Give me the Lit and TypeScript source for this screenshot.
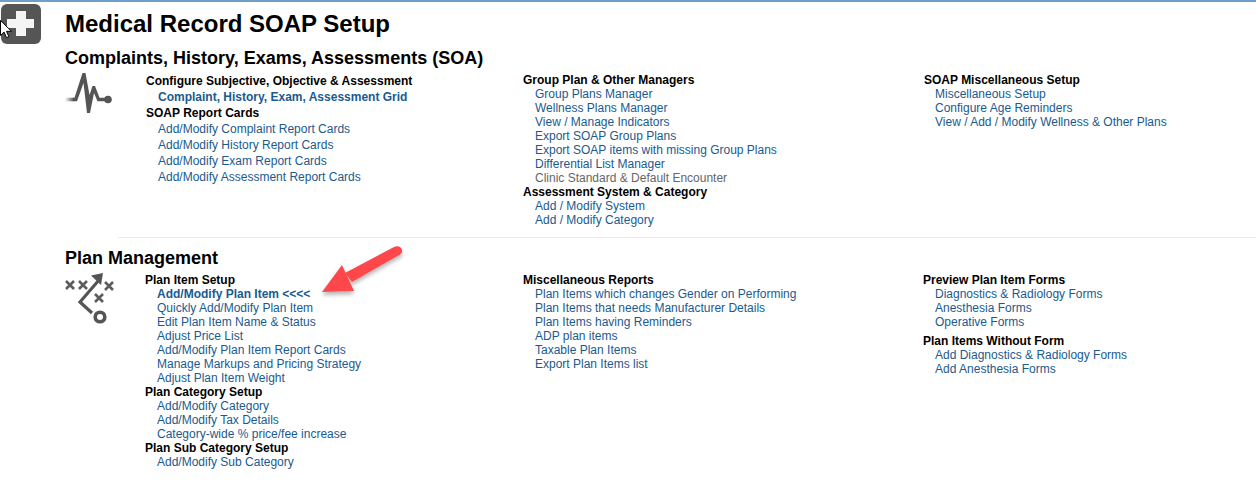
import { LitElement, css, html } from 'lit'
import { customElement } from 'lit/decorators.js'

type Row = { text: string; kind?: 'head' | 'head gap' | 'strong' | 'muted' }

const soaColumns: Row[][] = [
  [
    { text: 'Configure Subjective, Objective & Assessment', kind: 'head' },
    { text: 'Complaint, History, Exam, Assessment Grid', kind: 'strong' },
    { text: 'SOAP Report Cards', kind: 'head' },
    { text: 'Add/Modify Complaint Report Cards' },
    { text: 'Add/Modify History Report Cards' },
    { text: 'Add/Modify Exam Report Cards' },
    { text: 'Add/Modify Assessment Report Cards' },
  ],
  [
    { text: 'Group Plan & Other Managers', kind: 'head' },
    { text: 'Group Plans Manager' },
    { text: 'Wellness Plans Manager' },
    { text: 'View / Manage Indicators' },
    { text: 'Export SOAP Group Plans' },
    { text: 'Export SOAP items with missing Group Plans' },
    { text: 'Differential List Manager' },
    { text: 'Clinic Standard & Default Encounter', kind: 'muted' },
    { text: 'Assessment System & Category', kind: 'head' },
    { text: 'Add / Modify System' },
    { text: 'Add / Modify Category' },
  ],
  [
    { text: 'SOAP Miscellaneous Setup', kind: 'head' },
    { text: 'Miscellaneous Setup' },
    { text: 'Configure Age Reminders' },
    { text: 'View / Add / Modify Wellness & Other Plans' },
  ],
]

const planColumns: Row[][] = [
  [
    { text: 'Plan Item Setup', kind: 'head' },
    { text: 'Add/Modify Plan Item <<<<', kind: 'strong' },
    { text: 'Quickly Add/Modify Plan Item' },
    { text: 'Edit Plan Item Name & Status' },
    { text: 'Adjust Price List' },
    { text: 'Add/Modify Plan Item Report Cards' },
    { text: 'Manage Markups and Pricing Strategy' },
    { text: 'Adjust Plan Item Weight' },
    { text: 'Plan Category Setup', kind: 'head' },
    { text: 'Add/Modify Category' },
    { text: 'Add/Modify Tax Details' },
    { text: 'Category-wide % price/fee increase' },
    { text: 'Plan Sub Category Setup', kind: 'head' },
    { text: 'Add/Modify Sub Category' },
  ],
  [
    { text: 'Miscellaneous Reports', kind: 'head' },
    { text: 'Plan Items which changes Gender on Performing' },
    { text: 'Plan Items that needs Manufacturer Details' },
    { text: 'Plan Items having Reminders' },
    { text: 'ADP plan items' },
    { text: 'Taxable Plan Items' },
    { text: 'Export Plan Items list' },
  ],
  [
    { text: 'Preview Plan Item Forms', kind: 'head' },
    { text: 'Diagnostics & Radiology Forms' },
    { text: 'Anesthesia Forms' },
    { text: 'Operative Forms' },
    { text: 'Plan Items Without Form', kind: 'head gap' },
    { text: 'Add Diagnostics & Radiology Forms' },
    { text: 'Add Anesthesia Forms' },
  ],
]

@customElement('app-root')
export class AppRoot extends LitElement {
  private renderColumn(rows: Row[], extra = '') {
    return html`
      <div class="col ${extra}">
        ${rows.map((r) =>
          r.kind?.startsWith('head')
            ? html`<div class="${r.kind}">${r.text}</div>`
            : html`<a class="link ${r.kind ?? ''}">${r.text}</a>`
        )}
      </div>
    `
  }

  render() {
    return html`
      <div class="page">
        <svg class="plus" viewBox="0 0 40 40">
          <rect width="40" height="40" rx="6" fill="#555"></rect>
          <path d="M15 7h10v8h8v9h-8v8H15v-8H6v-9h9z" fill="#f4f4f4"></path>
        </svg>
        <svg class="cursor" viewBox="0 0 12 19">
          <path d="M.5.5v15l3.600-3.400 2.400 5.600 2.400-1-2.400-5.400h5z" fill="#fff" stroke="#000"></path>
        </svg>

        <h1>Medical Record SOAP Setup</h1>

        <h2>Complaints, History, Exams, Assessments (SOA)</h2>
        <div class="section soa">
          <svg class="icon" viewBox="0 0 48 42">
            <defs>
              <linearGradient id="fade" gradientUnits="userSpaceOnUse" x1="0" x2="9" y1="0" y2="0">
                <stop offset="0" stop-color="#555" stop-opacity="0"></stop>
                <stop offset="1" stop-color="#555"></stop>
              </linearGradient>
            </defs>
            <path d="M0 24.700h9v3.600H0z" fill="url(#fade)"></path>
            <path d="M8 24.700h1.500L17.500 0h3l4 22 3-9H30l4.500 11.700H43v3.600H32.500L29 20l-4 20h-3l-3.500-30L12 28.300H8z" fill="#555"></path>
            <circle cx="43" cy="26.500" r="3.800" fill="#555"></circle>
          </svg>
          ${soaColumns.map((c, i) => this.renderColumn(c, i === 0 ? 'loose' : i === 2 ? 'tight' : ''))}
        </div>

        <div class="rule"></div>

        <h2 class="plan-title">Plan Management</h2>
        <div class="section plan">
          <svg class="icon" viewBox="0 0 52 52" fill="none" stroke="#5c5c5c" stroke-width="2.600">
            <path d="M1 8l8 8M9 8l-8 8M14 8l8 8M22 8l-8 8M40 9l8 8M48 9l-8 8M30 21l8 8M38 21l-8 8"></path>
            <path d="M34 7L15 29l12 11" stroke="#555" stroke-width="3.200"></path>
            <path d="M38 0l-12 2.500 10 9.500z" fill="#555" stroke="none"></path>
            <circle cx="35" cy="44" r="4.800" stroke="#555" stroke-width="3.600"></circle>
          </svg>
          ${planColumns.map((c) => this.renderColumn(c))}
        </div>

        <svg class="arrow" viewBox="0 0 84 60">
          <defs>
            <filter id="shadow" x="-20%" y="-20%" width="140%" height="140%">
              <feDropShadow dx="0" dy="3" stdDeviation="2" flood-color="#000" flood-opacity="0.3"></feDropShadow>
            </filter>
          </defs>
          <g filter="url(#shadow)" fill="#fd474b">
            <path d="M0 47L20 20l12 26z"></path>
            <path d="M72 2c3-1.500 7-1 8 3 .5 2-.5 3.500-2 4.500L30 37l-7-9z"></path>
          </g>
        </svg>
      </div>
    `
  }

  static get styles() {
    return css`
      :host {
        display: block;
      }
      .page {
        position: relative;
        box-sizing: border-box;
        height: 483px;
        padding: 12px 0 0 65px;
        border-top: 2px solid #6f9fc9;
        overflow: hidden;
        background: #fff;
        color: #000;
        font-family: 'Liberation Sans', Arial, sans-serif;
        font-size: 12px;
      }
      h1 {
        margin: 0;
        font-size: 24px;
        line-height: 20px;
      }
      h2 {
        margin: 15px 0 0;
        font-size: 18px;
        line-height: 18px;
      }
      h2.plan-title {
        margin-top: 11px;
      }
      .section {
        display: grid;
        grid-template-columns: 81px 377px 401px 1fr;
        margin-top: 6px;
      }
      .section.plan {
        grid-template-columns: 80px 378px 400px 1fr;
        margin-top: 6px;
      }
      .col {
        display: flex;
        flex-direction: column;
        line-height: 14px;
      }
      .col.loose {
        line-height: 16px;
      }
      .head {
        font-weight: bold;
        color: #000;
      }
      .gap {
        margin-top: 5px;
        font-weight: bold;
      }
      .link {
        padding-left: 12px;
        color: #1a5a8e;
      }
      .col.tight .link {
        padding-left: 11px;
      }
      .link.strong {
        font-weight: bold;
      }
      .link.muted {
        color: #666;
      }
      .icon {
        display: block;
        width: 48px;
        height: 42px;
      }
      .plan .icon {
        width: 52px;
        height: 52px;
      }
      .rule {
        height: 1px;
        margin: 10px 0 0 53px;
        background: #e8e8e8;
      }
      .plus {
        position: absolute;
        top: 2px;
        left: 1px;
        width: 40px;
        height: 40px;
      }
      .cursor {
        position: absolute;
        top: 18px;
        left: 0;
        width: 12px;
        height: 19px;
      }
      .arrow {
        position: absolute;
        top: 243px;
        left: 322px;
        width: 84px;
        height: 60px;
      }
    `
  }
}
